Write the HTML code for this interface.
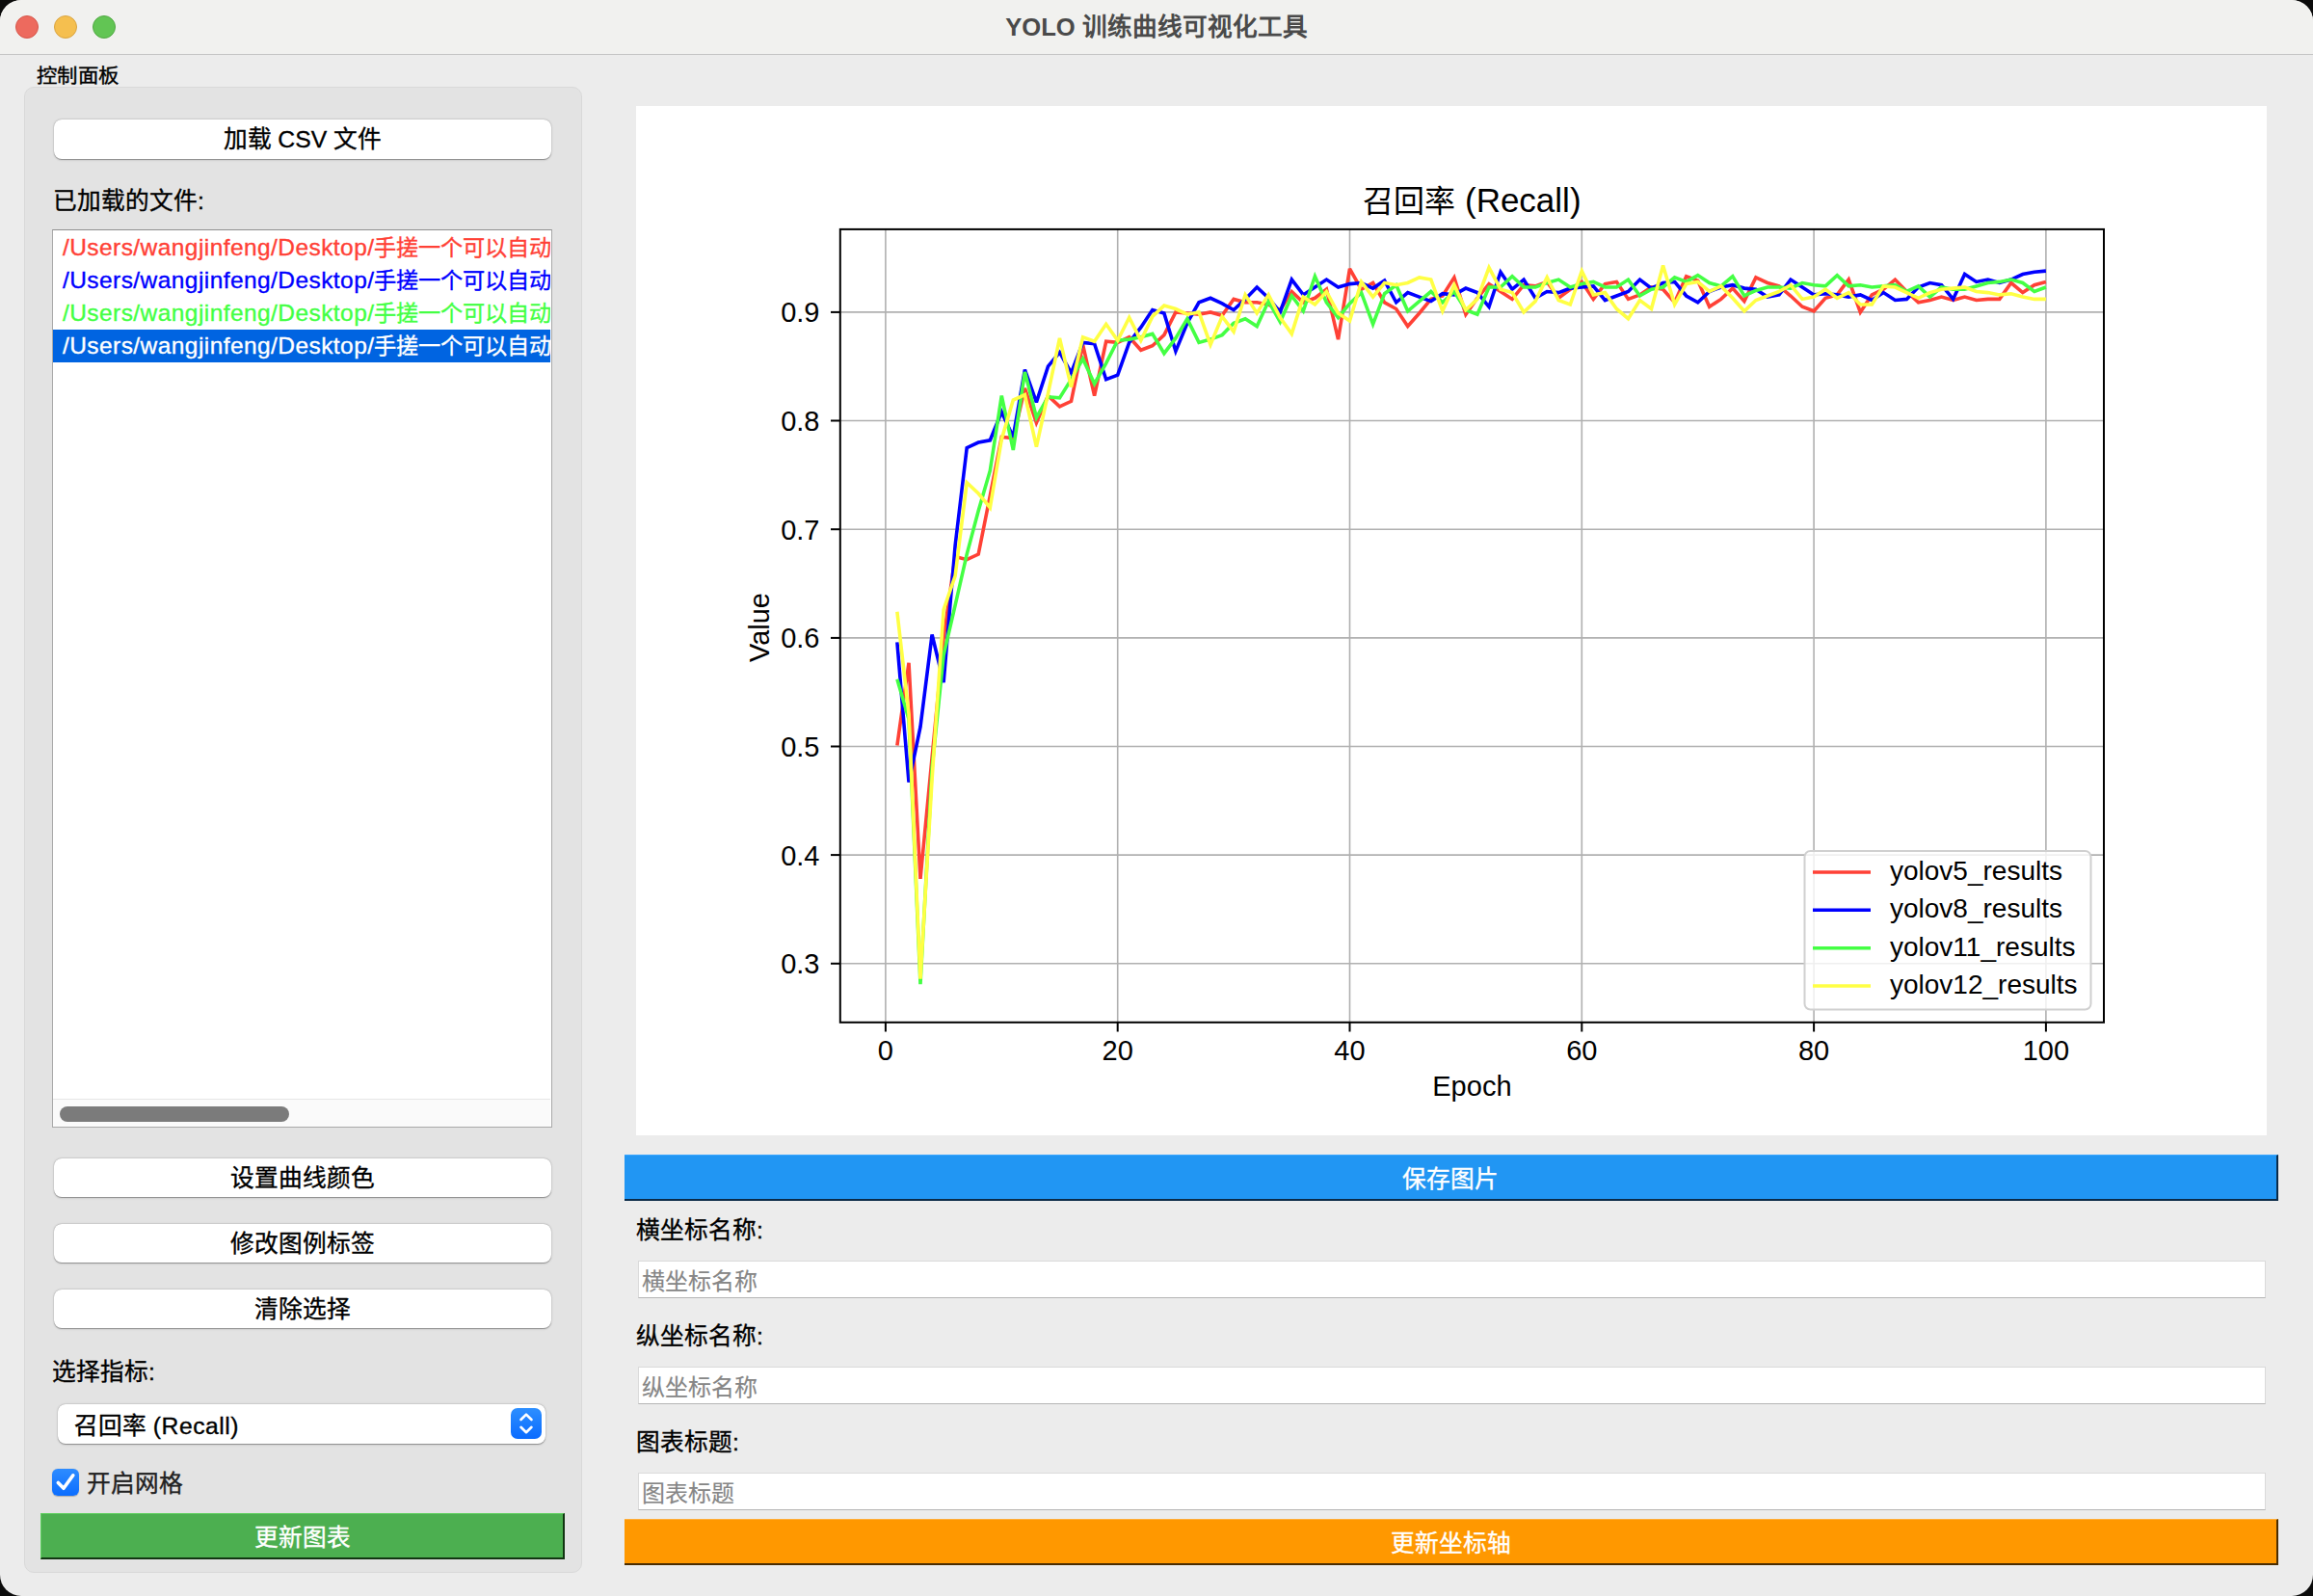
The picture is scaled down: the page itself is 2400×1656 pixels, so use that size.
<!DOCTYPE html>
<html lang="zh-CN"><head><meta charset="utf-8"><title>YOLO</title><style>
*{box-sizing:border-box}
html,body{margin:0;padding:0}
body{width:2400px;height:1656px;background:#0b0b0b;position:relative;overflow:hidden;font-family:"Liberation Sans", sans-serif;color:#000}
.win{position:absolute;left:0;top:0;width:2400px;height:1656px;background:#ececec;border-radius:22px;overflow:hidden}
.titlebar{position:absolute;left:0;top:0;width:2400px;height:57px;background:#f1f1ef;border-bottom:1px solid #c4c4c4}
.tl{position:absolute;top:16px;width:24px;height:24px;border-radius:50%}
.title{position:absolute;left:0;top:0;width:2400px;height:56px;line-height:56px;text-align:center;font-weight:bold;font-size:25.6px;color:#4a4a4a;-webkit-text-stroke:0}
.abs{position:absolute;white-space:nowrap}
.win{-webkit-text-stroke:0.35px currentColor}
.win svg{-webkit-text-stroke:0}
.t24{font-size:24.7px;line-height:30px}
.group{position:absolute;left:24.5px;top:90px;width:579px;height:1541.5px;background:#e3e3e3;border:1px solid #d9d9d9;border-radius:10px}
.btn{position:absolute;background:#fff;border-radius:8px;box-shadow:0 0.5px 1px rgba(0,0,0,0.3),0 0.5px 3px rgba(0,0,0,0.12),0 0 0 0.5px rgba(0,0,0,0.05);text-align:center;font-size:24.7px;padding-top:0.5px}
.list{position:absolute;left:54px;top:238px;width:519px;height:932px;background:#fff;border:1px solid #a9a9a9;border-top-color:#8f8f8f;overflow:hidden}
.row{position:absolute;left:0;width:516px;height:34px;line-height:33px;padding-left:10px;font-size:24px;white-space:nowrap;overflow:hidden}
.lat{font-size:24.5px;letter-spacing:0.43px}
.flat{position:absolute;text-align:center;color:#fff;font-size:24.7px;padding-top:2px}
.input{position:absolute;left:661.5px;width:1689px;height:39px;background:#fff;border:1px solid #dadada;border-bottom-color:#b5b5b5;font-size:24px;line-height:37px;color:#868686;padding-left:3.5px;padding-top:2.5px;-webkit-text-stroke:0.15px #868686}
</style></head>
<body><div class="win">
<div class="titlebar">
 <div class="tl" style="left:16px;background:#ed6a5e;border:1px solid #d5564a"></div>
 <div class="tl" style="left:56px;background:#f5bf4f;border:1px solid #d9a441"></div>
 <div class="tl" style="left:96px;background:#62c554;border:1px solid #51a843"></div>
 <div class="title">YOLO 训练曲线可视化工具</div>
</div>
<div class="abs" style="left:38px;top:63.5px;font-size:20px;line-height:30px;transform:scaleX(1.07);transform-origin:0 0">控制面板</div>
<div class="group"></div>
<div class="btn" style="left:55.5px;top:123.5px;width:516.5px;height:41px;line-height:41px">加载 CSV 文件</div>
<div class="abs t24" style="left:55px;top:194px">已加载的文件:</div>
<div class="list">
 <div class="row" style="top:1px;color:#ff4136"><span class="lat">/Users/wangjinfeng/Desktop/</span><span style="font-size:23.2px">手搓一个可以自动</span></div>
 <div class="row" style="top:35px;color:#0000ff"><span class="lat">/Users/wangjinfeng/Desktop/</span><span style="font-size:23.2px">手搓一个可以自动</span></div>
 <div class="row" style="top:69px;color:#44ff44"><span class="lat">/Users/wangjinfeng/Desktop/</span><span style="font-size:23.2px">手搓一个可以自动</span></div>
 <div class="row" style="top:103px;color:#fff;background:#0064e1"><span class="lat">/Users/wangjinfeng/Desktop/</span><span style="font-size:23.2px">手搓一个可以自动</span></div>
 <div style="position:absolute;left:0;top:901px;width:516px;height:29.5px;background:#fafafa;border-top:1px solid #e6e6e6"></div>
 <div style="position:absolute;left:7px;top:909px;width:238px;height:16px;background:#7b7b7b;border-radius:8px"></div>
</div>
<div class="btn" style="left:55.5px;top:1202px;width:516.5px;height:40px;line-height:40px">设置曲线颜色</div>
<div class="btn" style="left:55.5px;top:1270px;width:516.5px;height:40px;line-height:40px">修改图例标签</div>
<div class="btn" style="left:55.5px;top:1338px;width:516.5px;height:40px;line-height:40px">清除选择</div>
<div class="abs t24" style="left:54px;top:1408.5px">选择指标:</div>
<div class="btn" style="left:60px;top:1457px;width:506px;height:40.5px;line-height:40.5px;text-align:left;padding-left:17px;padding-top:3px">召回率 <span style="letter-spacing:0.5px">(Recall)</span>
 <div style="position:absolute;left:470px;top:4px;-webkit-text-stroke:0;width:32px;height:32px;border-radius:7px;background:linear-gradient(#2d8fff,#0a6bff)">
  <svg width="32" height="32" viewBox="0 0 32 32" style="position:absolute;left:0;top:0"><path d="M10.5 12 L16 6.6 L21.5 12 M10.5 19.8 L16 25.2 L21.5 19.8" fill="none" stroke="#fff" stroke-width="2.6" stroke-linecap="round" stroke-linejoin="round"/></svg>
 </div>
</div>
<div style="position:absolute;left:54px;top:1524px;width:28px;height:28px;border-radius:6px;background:linear-gradient(#2e8cff,#0b6dff);box-shadow:0 0.5px 1px rgba(0,0,0,0.25)">
 <svg width="28" height="28" viewBox="0 0 28 28" style="position:absolute;left:0;top:0"><path d="M6.3 14.5 L12 20.3 L21.8 6.8" fill="none" stroke="#fff" stroke-width="3.6" stroke-linecap="round" stroke-linejoin="round"/></svg>
</div>
<div class="abs t24" style="left:90px;top:1524.5px;color:#222">开启网格</div>
<div class="flat" style="left:42px;top:1570px;width:544px;height:48px;line-height:46px;background:#4caf50;border-top:1px solid #5fd05f;border-left:1px solid #5fd05f;border-bottom:2px solid #123512;border-right:2px solid #123512">更新图表</div>

<div style="position:absolute;left:660px;top:110px;width:1692px;height:1068px;background:#fff"><svg width="1692" height="1068" viewBox="660 110 1692 1068" style="position:absolute;left:0;top:0;font-family:"Liberation Sans", sans-serif">
<g stroke="#b0b0b0" stroke-width="1.6"><line x1="918.9" y1="237.9" x2="918.9" y2="1060.8"/><line x1="1159.7" y1="237.9" x2="1159.7" y2="1060.8"/><line x1="1400.5" y1="237.9" x2="1400.5" y2="1060.8"/><line x1="1641.3" y1="237.9" x2="1641.3" y2="1060.8"/><line x1="1882.1" y1="237.9" x2="1882.1" y2="1060.8"/><line x1="2122.9" y1="237.9" x2="2122.9" y2="1060.8"/><line x1="871.8" y1="999.8" x2="2183" y2="999.8"/><line x1="871.8" y1="887.1" x2="2183" y2="887.1"/><line x1="871.8" y1="774.5" x2="2183" y2="774.5"/><line x1="871.8" y1="661.9" x2="2183" y2="661.9"/><line x1="871.8" y1="549.2" x2="2183" y2="549.2"/><line x1="871.8" y1="436.5" x2="2183" y2="436.5"/><line x1="871.8" y1="323.9" x2="2183" y2="323.9"/></g>
<g clip-path="url(#clipax)"><polyline fill="none" stroke="#ff4136" stroke-width="3.6" stroke-linejoin="miter" stroke-miterlimit="3" points="930.9,773.4 943.0,687.8 955.0,911.9 967.1,785.8 979.1,661.9 991.1,577.4 1003.2,580.7 1015.2,575.1 1027.3,514.3 1039.3,453.4 1051.3,454.6 1063.4,402.8 1075.4,438.8 1087.5,410.6 1099.5,421.9 1111.5,416.3 1123.6,357.7 1135.6,410.6 1147.7,354.3 1159.7,355.4 1171.7,349.8 1183.8,363.3 1195.8,358.8 1207.9,347.6 1219.9,323.9 1231.9,325.0 1244.0,326.2 1256.0,323.9 1268.1,327.3 1280.1,310.4 1292.1,313.8 1304.2,313.8 1316.2,316.0 1328.3,321.6 1340.3,302.5 1352.3,313.8 1364.4,309.3 1376.4,300.2 1388.5,352.1 1400.5,278.8 1412.5,300.2 1424.6,293.5 1436.6,313.8 1448.7,320.5 1460.7,338.5 1472.7,325.0 1484.8,310.4 1496.8,307.0 1508.9,287.9 1520.9,326.2 1532.9,309.3 1545.0,294.6 1557.0,302.5 1569.1,310.4 1581.1,295.7 1593.1,296.9 1605.2,292.4 1617.2,309.3 1629.3,300.2 1641.3,292.4 1653.3,310.4 1665.4,294.6 1677.4,292.4 1689.5,310.4 1701.5,305.9 1713.5,298.0 1725.6,300.2 1737.6,313.8 1749.7,286.7 1761.7,291.2 1773.7,318.3 1785.8,310.4 1797.8,299.1 1809.9,312.6 1821.9,287.9 1833.9,293.5 1846.0,296.9 1858.0,307.0 1870.1,318.3 1882.1,322.8 1894.1,309.3 1906.2,305.9 1918.2,290.1 1930.3,323.9 1942.3,305.9 1954.3,300.2 1966.4,290.1 1978.4,302.5 1990.5,313.8 2002.5,311.5 2014.5,308.1 2026.6,311.5 2038.6,308.1 2050.7,311.5 2062.7,310.4 2074.7,310.4 2086.8,293.5 2098.8,303.6 2110.9,295.7 2122.9,292.4"/><polyline fill="none" stroke="#0000ff" stroke-width="3.6" stroke-linejoin="miter" stroke-miterlimit="3" points="930.9,666.4 943.0,811.7 955.0,754.2 967.1,658.5 979.1,708.0 991.1,566.1 1003.2,464.7 1015.2,459.1 1027.3,456.8 1039.3,427.5 1051.3,453.4 1063.4,383.6 1075.4,417.4 1087.5,380.2 1099.5,365.6 1111.5,387.0 1123.6,355.4 1135.6,356.6 1147.7,393.7 1159.7,389.2 1171.7,355.4 1183.8,339.7 1195.8,321.6 1207.9,325.0 1219.9,364.5 1231.9,335.2 1244.0,313.8 1256.0,309.3 1268.1,314.9 1280.1,321.6 1292.1,310.4 1304.2,298.0 1316.2,309.3 1328.3,323.9 1340.3,290.1 1352.3,305.9 1364.4,298.0 1376.4,290.1 1388.5,298.0 1400.5,294.6 1412.5,293.5 1424.6,299.1 1436.6,291.2 1448.7,313.8 1460.7,303.6 1472.7,308.1 1484.8,312.6 1496.8,304.7 1508.9,305.9 1520.9,299.1 1532.9,303.6 1545.0,318.3 1557.0,282.2 1569.1,300.2 1581.1,290.1 1593.1,309.3 1605.2,302.5 1617.2,303.6 1629.3,299.1 1641.3,298.0 1653.3,296.9 1665.4,311.5 1677.4,307.0 1689.5,302.5 1701.5,290.1 1713.5,299.1 1725.6,293.5 1737.6,292.4 1749.7,307.0 1761.7,313.8 1773.7,302.5 1785.8,298.0 1797.8,295.7 1809.9,299.1 1821.9,300.2 1833.9,308.1 1846.0,305.9 1858.0,290.1 1870.1,298.0 1882.1,305.9 1894.1,304.7 1906.2,305.9 1918.2,308.1 1930.3,305.9 1942.3,311.5 1954.3,303.6 1966.4,311.5 1978.4,310.4 1990.5,298.0 2002.5,293.5 2014.5,295.7 2026.6,310.4 2038.6,284.5 2050.7,292.4 2062.7,290.1 2074.7,293.5 2086.8,290.1 2098.8,284.5 2110.9,282.2 2122.9,281.1"/><polyline fill="none" stroke="#44ff44" stroke-width="3.6" stroke-linejoin="miter" stroke-miterlimit="3" points="930.9,704.7 943.0,746.3 955.0,1021.2 967.1,797.0 979.1,679.9 991.1,628.1 1003.2,575.1 1015.2,530.0 1027.3,488.4 1039.3,410.6 1051.3,467.0 1063.4,385.9 1075.4,433.2 1087.5,411.8 1099.5,412.9 1111.5,393.7 1123.6,372.3 1135.6,398.2 1147.7,376.8 1159.7,353.2 1171.7,352.1 1183.8,349.8 1195.8,346.4 1207.9,366.7 1219.9,350.9 1231.9,330.7 1244.0,355.4 1256.0,352.1 1268.1,347.6 1280.1,335.2 1292.1,330.7 1304.2,338.5 1316.2,312.6 1328.3,334.0 1340.3,307.0 1352.3,322.8 1364.4,286.7 1376.4,313.8 1388.5,329.5 1400.5,314.9 1412.5,303.6 1424.6,336.3 1436.6,304.7 1448.7,295.7 1460.7,322.8 1472.7,312.6 1484.8,302.5 1496.8,313.8 1508.9,302.5 1520.9,321.6 1532.9,326.2 1545.0,298.0 1557.0,298.0 1569.1,286.7 1581.1,298.0 1593.1,298.0 1605.2,293.5 1617.2,290.1 1629.3,298.0 1641.3,294.6 1653.3,292.4 1665.4,298.0 1677.4,298.0 1689.5,290.1 1701.5,307.0 1713.5,300.2 1725.6,298.0 1737.6,287.9 1749.7,292.4 1761.7,285.6 1773.7,293.5 1785.8,296.9 1797.8,286.7 1809.9,307.0 1821.9,301.4 1833.9,298.0 1846.0,298.0 1858.0,299.1 1870.1,293.5 1882.1,295.7 1894.1,296.9 1906.2,285.6 1918.2,296.9 1930.3,295.7 1942.3,298.0 1954.3,296.9 1966.4,295.7 1978.4,302.5 1990.5,296.9 2002.5,308.1 2014.5,298.0 2026.6,300.2 2038.6,300.2 2050.7,296.9 2062.7,293.5 2074.7,292.4 2086.8,290.1 2098.8,293.5 2110.9,302.5 2122.9,298.0"/><polyline fill="none" stroke="#ffff44" stroke-width="3.6" stroke-linejoin="miter" stroke-miterlimit="3" points="930.9,634.8 943.0,740.7 955.0,1015.6 967.1,808.3 979.1,632.6 991.1,597.6 1003.2,500.8 1015.2,512.0 1027.3,526.7 1039.3,455.7 1051.3,415.1 1063.4,409.5 1075.4,463.6 1087.5,408.4 1099.5,350.9 1111.5,401.6 1123.6,349.8 1135.6,354.3 1147.7,336.3 1159.7,353.2 1171.7,329.5 1183.8,353.2 1195.8,328.4 1207.9,317.1 1219.9,320.5 1231.9,326.2 1244.0,323.9 1256.0,357.7 1268.1,328.4 1280.1,344.2 1292.1,305.9 1304.2,325.0 1316.2,305.9 1328.3,329.5 1340.3,346.4 1352.3,308.1 1364.4,316.0 1376.4,302.5 1388.5,325.0 1400.5,332.9 1412.5,292.4 1424.6,308.1 1436.6,293.5 1448.7,295.7 1460.7,293.5 1472.7,287.9 1484.8,290.1 1496.8,322.8 1508.9,295.7 1520.9,321.6 1532.9,310.4 1545.0,277.7 1557.0,300.2 1569.1,303.6 1581.1,323.9 1593.1,312.6 1605.2,287.9 1617.2,311.5 1629.3,316.0 1641.3,281.1 1653.3,305.9 1665.4,303.6 1677.4,320.5 1689.5,330.7 1701.5,311.5 1713.5,320.5 1725.6,275.5 1737.6,316.0 1749.7,294.6 1761.7,292.4 1773.7,302.5 1785.8,296.9 1797.8,309.3 1809.9,322.8 1821.9,311.5 1833.9,307.0 1846.0,302.5 1858.0,295.7 1870.1,310.4 1882.1,308.1 1894.1,300.2 1906.2,309.3 1918.2,303.6 1930.3,316.0 1942.3,316.0 1954.3,296.9 1966.4,298.0 1978.4,303.6 1990.5,309.3 2002.5,303.6 2014.5,300.2 2026.6,299.1 2038.6,298.0 2050.7,302.5 2062.7,303.6 2074.7,305.9 2086.8,304.7 2098.8,308.1 2110.9,310.4 2122.9,310.4"/></g>
<clipPath id="clipax"><rect x="871.8" y="237.9" width="1311.2" height="822.9"/></clipPath>
<g stroke="#000" stroke-width="2"><line x1="918.9" y1="1060.8" x2="918.9" y2="1070.5"/><line x1="1159.7" y1="1060.8" x2="1159.7" y2="1070.5"/><line x1="1400.5" y1="1060.8" x2="1400.5" y2="1070.5"/><line x1="1641.3" y1="1060.8" x2="1641.3" y2="1070.5"/><line x1="1882.1" y1="1060.8" x2="1882.1" y2="1070.5"/><line x1="2122.9" y1="1060.8" x2="2122.9" y2="1070.5"/><line x1="862" y1="999.8" x2="871.8" y2="999.8"/><line x1="862" y1="887.1" x2="871.8" y2="887.1"/><line x1="862" y1="774.5" x2="871.8" y2="774.5"/><line x1="862" y1="661.9" x2="871.8" y2="661.9"/><line x1="862" y1="549.2" x2="871.8" y2="549.2"/><line x1="862" y1="436.5" x2="871.8" y2="436.5"/><line x1="862" y1="323.9" x2="871.8" y2="323.9"/></g>
<rect x="871.8" y="237.9" width="1311.2" height="822.9" fill="none" stroke="#000" stroke-width="2"/>
<g font-size="29" fill="#000"><text x="918.9" y="1099.5" text-anchor="middle">0</text><text x="1159.7" y="1099.5" text-anchor="middle">20</text><text x="1400.5" y="1099.5" text-anchor="middle">40</text><text x="1641.3" y="1099.5" text-anchor="middle">60</text><text x="1882.1" y="1099.5" text-anchor="middle">80</text><text x="2122.9" y="1099.5" text-anchor="middle">100</text><text x="850.5" y="1010.3" text-anchor="end">0.3</text><text x="850.5" y="897.6" text-anchor="end">0.4</text><text x="850.5" y="785.0" text-anchor="end">0.5</text><text x="850.5" y="672.4" text-anchor="end">0.6</text><text x="850.5" y="559.7" text-anchor="end">0.7</text><text x="850.5" y="447.0" text-anchor="end">0.8</text><text x="850.5" y="334.4" text-anchor="end">0.9</text></g>
<text x="1527.4" y="220" text-anchor="middle" font-size="35"><tspan font-size="32">召回率</tspan> (Recall)</text>
<text x="1527.4" y="1136.5" text-anchor="middle" font-size="29">Epoch</text>
<text transform="translate(797.5,651) rotate(-90)" text-anchor="middle" font-size="29">Value</text>
<g font-size="28" fill="#000"><rect x="1872.5" y="883" width="297" height="164.5" rx="6" ry="6" fill="rgba(255,255,255,0.8)" stroke="#d0d0d0" stroke-width="2"/><line x1="1881" y1="905.0" x2="1941" y2="905.0" stroke="#ff4136" stroke-width="3.6"/><text x="1961" y="913.0">yolov5_results</text><line x1="1881" y1="944.3" x2="1941" y2="944.3" stroke="#0000ff" stroke-width="3.6"/><text x="1961" y="952.3">yolov8_results</text><line x1="1881" y1="983.7" x2="1941" y2="983.7" stroke="#44ff44" stroke-width="3.6"/><text x="1961" y="991.7">yolov11_results</text><line x1="1881" y1="1023.0" x2="1941" y2="1023.0" stroke="#ffff44" stroke-width="3.6"/><text x="1961" y="1031.0">yolov12_results</text></g>
</svg></div>
<div class="flat" style="left:648px;top:1198px;width:1716px;height:48px;line-height:46px;background:#2196f3;border-top:1px solid #3aa6ff;border-bottom:2px solid #0b2b47;border-right:2px solid #0b2b47">保存图片</div>
<div class="abs t24" style="left:660px;top:1262px">横坐标名称:</div>
<div class="input" style="top:1307.5px">横坐标名称</div>
<div class="abs t24" style="left:660px;top:1372px">纵坐标名称:</div>
<div class="input" style="top:1417.5px">纵坐标名称</div>
<div class="abs t24" style="left:660px;top:1482px">图表标题:</div>
<div class="input" style="top:1527.5px">图表标题</div>
<div class="flat" style="left:648px;top:1576px;width:1716px;height:48px;line-height:46px;background:#ff9800;border-top:1px solid #ffae3a;border-bottom:2px solid #4a2c00;border-right:2px solid #4a2c00">更新坐标轴</div>
</div></body></html>
